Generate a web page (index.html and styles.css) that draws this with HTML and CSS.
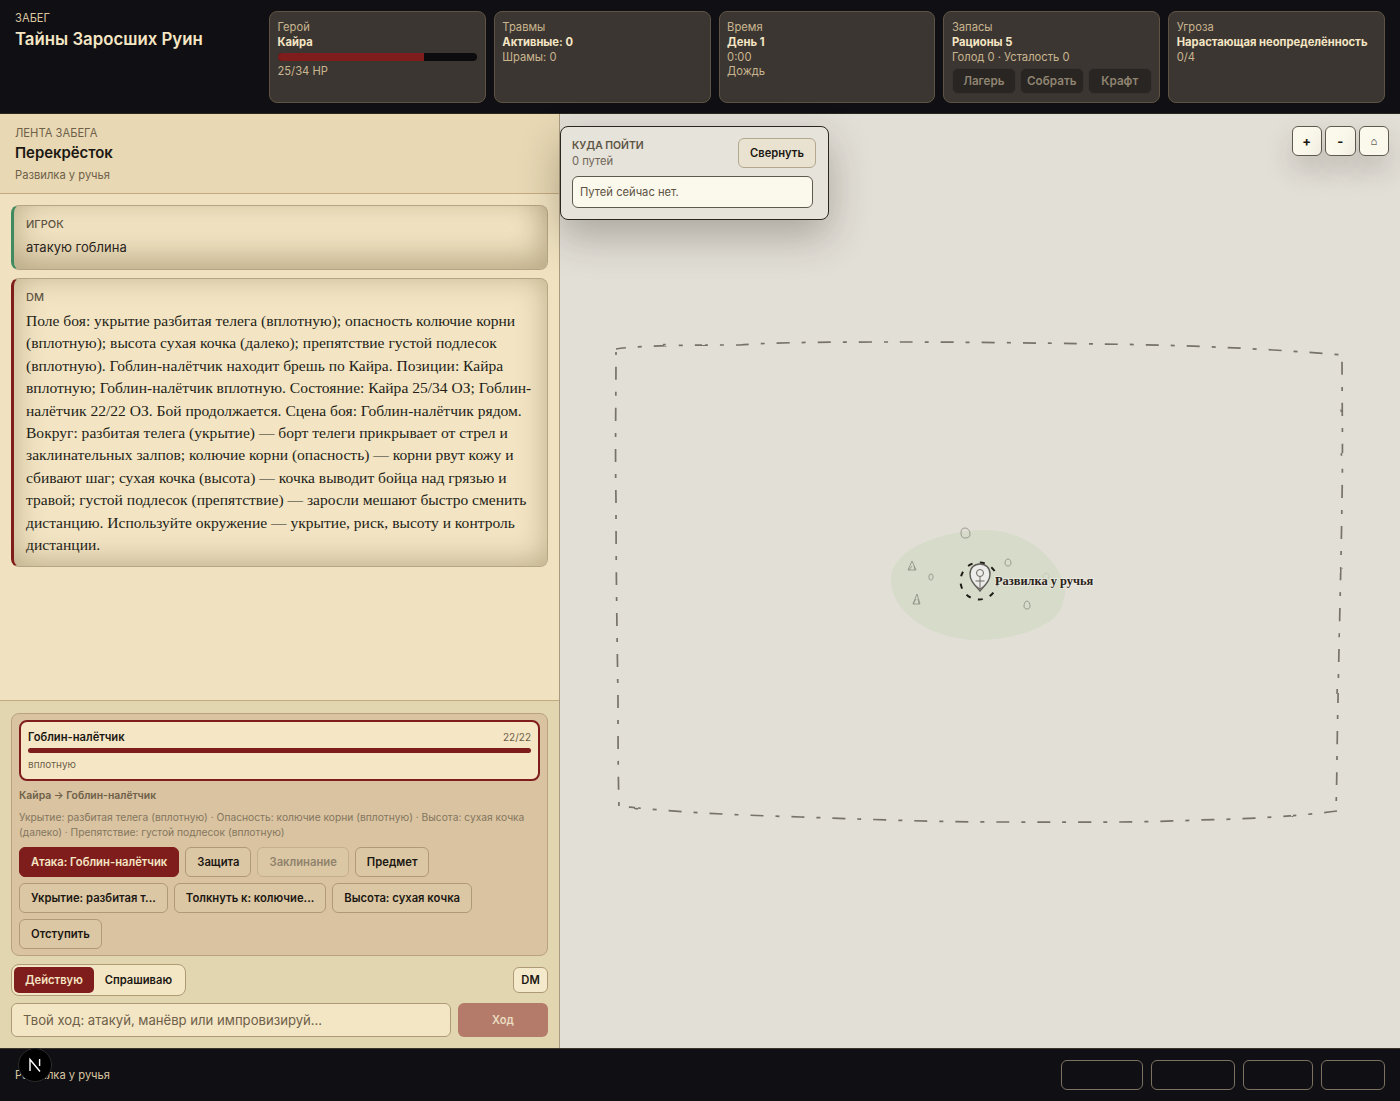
FILE: index.html
```html
<!DOCTYPE html>
<html lang="ru">
<head>
  <meta charset="UTF-8">
  <meta name="viewport" content="width=device-width, initial-scale=1.0">
  <title>Тайны Заросших Руин</title>
  <link rel="stylesheet" href="styles.css">
</head>
<body>
  <div class="app">
    <!-- верхняя панель -->
    <header class="topbar">
      <div class="run-title">
        <div class="run-kicker">ЗАБЕГ</div>
        <div class="run-name">Тайны Заросших Руин</div>
      </div>
      <div class="stat-grid">
        <div class="stat-card">
          <div>Герой</div>
          <div class="stat-strong">Кайра</div>
          <div class="hp-track"><div class="hp-fill" style="width: 73.5%"></div></div>
          <div>25/34 HP</div>
        </div>
        <div class="stat-card">
          <div>Травмы</div>
          <div class="stat-strong">Активные: 0</div>
          <div>Шрамы: 0</div>
        </div>
        <div class="stat-card">
          <div>Время</div>
          <div class="stat-strong">День 1</div>
          <div>0:00</div>
          <div>Дождь</div>
        </div>
        <div class="stat-card">
          <div>Запасы</div>
          <div class="stat-strong">Рационы 5</div>
          <div>Голод 0 · Усталость 0</div>
          <div class="camp-row">
            <button class="camp-btn">Лагерь</button>
            <button class="camp-btn">Собрать</button>
            <button class="camp-btn">Крафт</button>
          </div>
        </div>
        <div class="stat-card">
          <div>Угроза</div>
          <div class="stat-strong">Нарастающая неопределённость</div>
          <div>0/4</div>
        </div>
      </div>
    </header>

    <main class="main">
      <!-- лента -->
      <section class="feed-panel">
        <div class="feed-head">
          <div class="feed-kicker">ЛЕНТА ЗАБЕГА</div>
          <div class="feed-title">Перекрёсток</div>
          <div class="feed-sub">Развилка у ручья</div>
        </div>
        <div class="feed-list">
          <article class="msg msg-player">
            <div class="msg-author">ИГРОК</div>
            <p class="msg-plain">атакую гоблина</p>
          </article>
          <article class="msg msg-dm">
            <div class="msg-author">DM</div>
            <p class="msg-serif">Поле боя: укрытие разбитая телега (вплотную); опасность колючие корни (вплотную); высота сухая кочка (далеко); препятствие густой подлесок (вплотную). Гоблин-налётчик находит брешь по Кайра. Позиции: Кайра вплотную; Гоблин-налётчик вплотную. Состояние: Кайра 25/34 ОЗ; Гоблин-налётчик 22/22 ОЗ. Бой продолжается. Сцена боя: Гоблин-налётчик рядом. Вокруг: разбитая телега (укрытие) — борт телеги прикрывает от стрел и заклинательных залпов; колючие корни (опасность) — корни рвут кожу и сбивают шаг; сухая кочка (высота) — кочка выводит бойца над грязью и травой; густой подлесок (препятствие) — заросли мешают быстро сменить дистанцию. Используйте окружение — укрытие, риск, высоту и контроль дистанции.</p>
          </article>
        </div>
        <div class="composer">
          <div class="combat-box">
            <div class="enemy-card">
              <div class="enemy-row">
                <span class="enemy-name">Гоблин-налётчик</span>
                <span class="enemy-hp">22/22</span>
              </div>
              <div class="enemy-track"></div>
              <div class="enemy-range">вплотную</div>
            </div>
            <div class="combat-target">Кайра → Гоблин-налётчик</div>
            <div class="combat-terrain">Укрытие: разбитая телега (вплотную) · Опасность: колючие корни (вплотную) · Высота: сухая кочка (далеко) · Препятствие: густой подлесок (вплотную)</div>
            <div class="action-row">
              <button class="action-btn action-primary">Атака: Гоблин-налётчик</button>
              <button class="action-btn">Защита</button>
              <button class="action-btn action-off">Заклинание</button>
              <button class="action-btn">Предмет</button>
              <button class="action-btn">Укрытие: разбитая т...</button>
              <button class="action-btn">Толкнуть к: колючие...</button>
              <button class="action-btn">Высота: сухая кочка</button>
              <button class="action-btn">Отступить</button>
            </div>
          </div>
          <div class="mode-row">
            <div class="mode-switch">
              <button class="mode-btn mode-on">Действую</button>
              <button class="mode-btn">Спрашиваю</button>
            </div>
            <button class="dm-btn">DM</button>
          </div>
          <div class="input-row">
            <div class="turn-input">Твой ход: атакуй, манёвр или импровизируй...</div>
            <button class="turn-btn">Ход</button>
          </div>
        </div>
      </section>

      <!-- карта -->
      <section class="map-panel">
        <svg class="map-svg" width="840" height="934" viewBox="560 114 840 934">
          <defs>
            <filter id="rough" x="-5%" y="-5%" width="110%" height="110%">
              <feTurbulence type="fractalNoise" baseFrequency="0.06" numOctaves="2" seed="4"/>
              <feDisplacementMap in="SourceGraphic" scale="2"/>
            </filter>
          </defs>
          <g class="map-border" filter="url(#rough)">
            <path stroke-dashoffset="3" d="M616 349 C640 345 700 345 740 345 C770 342 850 342 900 342 C960 342 1040 343 1100 344 C1180 345 1260 348 1342 355"/>
            <path stroke-dashoffset="-7" d="M1342 355 C1342 400 1343 450 1342 500 C1341 570 1339 640 1338 700 C1337 740 1337 780 1336 809"/>
            <path d="M1337 811 C1300 816 1250 819 1200 820 C1130 823 1060 822 1000 822 C930 822 860 819 800 817 C740 815 680 813 620 806"/>
            <path stroke-dashoffset="24" d="M619 807 C618 770 618 735 618 700 C617 630 616 570 616 500 C615 450 616 400 616 352"/>
          </g>
          <path class="map-blob" d="M891 578 C892 553 930 533 980 530 C1005 529 1022 537 1037 547 C1050 557 1066 577 1065 593 C1063 610 1055 619 1047 623 C1030 633 1005 640 980 640 C935 640 890 615 891 578 Z"/>
          <g class="map-tree">
            <path d="M965 528 C968 528 970 531 970 534 C970 537 968 538 965 538 C962 538 961 536 961 533 C961 530 962 528 965 528 Z"/>
            <path d="M1008 559 C1010 559 1011 561 1011 563 C1011 565 1010 566 1008 566 C1006 566 1005 565 1005 563 C1005 561 1006 559 1008 559 Z"/>
            <path d="M931 574 C933 574 933 576 933 577 C933 579 932 580 931 580 C929 580 929 579 929 577 C929 576 929 574 931 574 Z"/>
            <path d="M1027 601 C1029 601 1030 604 1030 606 C1030 608 1029 609 1027 609 C1025 609 1024 608 1024 606 C1024 604 1025 601 1027 601 Z"/>
            <path class="map-tree-faint" d="M1046 573 C1048 573 1049 575 1049 577 C1049 579 1048 580 1046 580 C1044 580 1043 579 1043 577 C1043 575 1044 573 1046 573 Z"/>
            <path d="M912 561 L916 570 L908 570 Z M912 566 L909 570 M914 566 L915 570"/>
            <path d="M917 594 L920 604 L913 604 Z M916 599 L913 604 M918 599 L919 604"/>
          </g>
          <circle class="map-ring" cx="979" cy="581" r="18.5"/>
          <path class="map-pin" d="M980 591 C975 585 970 581 970 574 C970 568 974 564 980 564 C986 564 990 568 990 574 C990 581 985 585 980 591 Z"/>
          <g class="map-glyph">
            <circle cx="980" cy="573" r="3.5"/>
            <path d="M980 576.5 V589 M975.5 581 H984.5 M976 586 L980 589 L984 586"/>
          </g>
          <text class="map-label" x="995" y="585">Развилка у ручья</text>
        </svg>

        <div class="route-panel">
          <div class="route-head">
            <div>
              <div class="route-title">КУДА ПОЙТИ</div>
              <div class="route-count">0 путей</div>
            </div>
            <button class="route-toggle">Свернуть</button>
          </div>
          <div class="route-empty">Путей сейчас нет.</div>
        </div>

        <div class="zoom-group">
          <button class="zoom-btn">+</button>
          <button class="zoom-btn">-</button>
          <button class="zoom-btn zoom-home">⌂</button>
        </div>
      </section>
    </main>

    <footer class="bottombar">
      <span class="location">Развилка у ручья</span>
      <div class="footer-btns">
        <button class="footer-btn footer-a"></button>
        <button class="footer-btn footer-b"></button>
        <button class="footer-btn footer-c"></button>
        <button class="footer-btn footer-d"></button>
      </div>
    </footer>

    <div class="next-badge">
      <svg width="16" height="16" viewBox="0 0 16 16"><path d="M3 14 V2.5 L13 14.5 M12.6 2 V9" fill="none" stroke="#fff" stroke-width="1.4"/></svg>
    </div>
  </div>
</body>
</html>
```

FILE: styles.css
```css
* {
  box-sizing: border-box;
}

body {
  margin: 0;
  font-family: Inter, "Noto Sans", sans-serif;
  background: #100f14;
  overflow: hidden;
}

button {
  font-family: inherit;
  cursor: pointer;
}

.app {
  position: relative;
  width: 1400px;
  height: 1101px;
  display: flex;
  flex-direction: column;
}

/* верхняя панель */
.topbar {
  height: 114px;
  flex: none;
  display: flex;
  padding: 11px 15px 0;
  background: #100f14;
  border-bottom: 1px solid #2a2620;
}

.run-title {
  width: 254px;
  flex: none;
}

.run-kicker {
  font-size: 11.2px;
  line-height: 14px;
  color: #d9c6a2;
}

.run-name {
  margin-top: 3px;
  font-size: 16.8px;
  line-height: 22px;
  font-weight: 600;
  color: #f5e6c4;
}

.stat-grid {
  flex: 1;
  display: grid;
  grid-template-columns: repeat(5, 1fr);
  gap: 8px;
}

.stat-card {
  height: 92px;
  padding: 8px 7.5px 0;
  background: #3b3632;
  border: 1px solid #5f5443;
  border-radius: 8px;
  font-size: 11.2px;
  line-height: 14.8px;
  color: #c9b58f;
}

.stat-strong {
  font-weight: 700;
  color: #f5e6c4;
}

.hp-track {
  height: 8px;
  margin: 3px 0 3.8px;
  background: #0c0b0d;
  border-radius: 4px;
  overflow: hidden;
}

.hp-fill {
  height: 100%;
  background: #7f1d1d;
}

.camp-row {
  display: flex;
  gap: 4px;
  margin-top: 3.6px;
}

.camp-btn {
  flex: 1;
  height: 26px;
  padding: 0;
  background: #282522;
  border: 1px solid #38332e;
  border-radius: 6px;
  font-size: 11.7px;
  font-weight: 600;
  color: #8f8471;
}

.main {
  flex: 1;
  min-height: 0;
  display: flex;
}

/* лента */
.feed-panel {
  width: 560px;
  flex: none;
  display: flex;
  flex-direction: column;
  background: #f0e2c0;
  border-right: 1px solid #a89a80;
}

.feed-head {
  height: 80px;
  flex: none;
  padding: 12px 15px 0;
  background: #e8d8b4;
  border-bottom: 1px solid #c4aa80;
}

.feed-kicker {
  font-size: 11.2px;
  line-height: 14px;
  color: #6e6049;
}

.feed-title {
  margin-top: 3px;
  font-size: 14.9px;
  line-height: 20px;
  font-weight: 600;
  color: #1b1712;
}

.feed-sub {
  margin-top: 5px;
  font-size: 11.2px;
  line-height: 14px;
  color: #6e6049;
}

.feed-list {
  flex: 1;
  min-height: 0;
  display: flex;
  flex-direction: column;
  gap: 8px;
  padding: 11px;
}

.msg {
  padding: 10px 12px 10px 12px;
  border: 1px solid #b5a584;
  border-left-width: 3px;
  border-radius: 8px;
  background: #f3e5c4;
  box-shadow: inset 0 -4px 30px rgba(90, 70, 30, 0.36);
}

.msg-player {
  height: 65px;
  border-left-color: #3f8a5f;
  box-shadow: inset 0 -10px 34px rgba(90, 70, 30, 0.4);
}

.msg-dm {
  border-left-color: #7f1d1d;
}

.msg-author {
  font-size: 11px;
  line-height: 16px;
  font-weight: 500;
  color: #5f5443;
}

.msg-plain {
  margin: 5px 0 0;
  font-size: 13px;
  line-height: 20px;
  color: #2a241c;
}

.msg-serif {
  margin: 5px 0 0;
  font-family: "Liberation Serif", serif;
  font-size: 15.55px;
  line-height: 22.4px;
  color: #231e17;
}

/* форма хода */
.composer {
  flex: none;
  height: 348px;
  padding: 12px 11px 0;
  background: #e2d6b0;
  border-top: 1px solid #c4aa80;
}

.combat-box {
  height: 243px;
  padding: 6px 7px;
  background: #d9c3a0;
  border: 1px solid #b9a27d;
  border-radius: 8px;
}

.enemy-card {
  height: 61px;
  padding: 8px 7px 0;
  background: #f5e7c6;
  border: 2px solid #7f1d1d;
  border-radius: 8px;
}

.enemy-row {
  display: flex;
  justify-content: space-between;
  font-size: 11.2px;
  line-height: 14px;
}

.enemy-name {
  font-weight: 600;
  color: #1b1712;
}

.enemy-hp {
  font-size: 10px;
  color: #6e6049;
}

.enemy-track {
  height: 5px;
  margin-top: 4px;
  background: #7f1d1d;
  border-radius: 3px;
}

.enemy-range {
  margin-top: 4px;
  font-size: 10px;
  line-height: 14px;
  color: #6e6049;
}

.combat-target {
  margin-top: 8px;
  font-size: 10.4px;
  line-height: 14px;
  font-weight: 600;
  color: #6e6049;
}

.combat-terrain {
  margin-top: 7px;
  font-size: 10.25px;
  line-height: 15px;
  color: #84765f;
}

.action-row {
  display: flex;
  flex-wrap: wrap;
  gap: 6px;
  margin-top: 7px;
}

.action-btn {
  height: 30px;
  padding: 0 11px;
  background: #dcc7a4;
  border: 1px solid #b09a76;
  border-radius: 6px;
  font-size: 11.25px;
  font-weight: 600;
  color: #1b1712;
}

.action-primary {
  background: #7f1d1d;
  border-color: #7f1d1d;
  color: #f5e6c4;
}

.action-off {
  color: #8f826c;
  border-color: #c4b08e;
}

.mode-row {
  display: flex;
  justify-content: space-between;
  align-items: center;
  margin-top: 8px;
}

.mode-switch {
  display: flex;
  height: 32px;
  padding: 2px;
  background: #f3e6c5;
  border: 1px solid #b09a76;
  border-radius: 8px;
}

.mode-btn {
  height: 26px;
  padding: 0 11px;
  background: transparent;
  border: 0;
  border-radius: 5px;
  font-size: 11.2px;
  font-weight: 600;
  color: #1b1712;
}

.mode-on {
  background: #7f1d1d;
  color: #f5e6c4;
}

.dm-btn {
  width: 35px;
  height: 26px;
  padding: 0;
  background: #f5e9cc;
  border: 1px solid #b09a76;
  border-radius: 6px;
  font-size: 11.2px;
  font-weight: 600;
  color: #1b1712;
}

.input-row {
  display: flex;
  gap: 7px;
  margin-top: 7px;
}

.turn-input {
  flex: 1;
  height: 34px;
  padding: 0 11px;
  background: #f3e6c5;
  border: 1px solid #b09a76;
  border-radius: 6px;
  font-size: 13.12px;
  line-height: 32px;
  color: #6e6049;
}

.turn-btn {
  width: 90px;
  height: 34px;
  padding: 0;
  background: #b47b6b;
  border: 0;
  border-radius: 6px;
  font-size: 11.2px;
  font-weight: 600;
  color: #eadcc0;
}

/* карта */
.map-panel {
  position: relative;
  flex: 1;
  background: #e2dfd7;
}

.map-svg {
  position: absolute;
  left: 0;
  top: 0;
}

.map-border path {
  fill: none;
  stroke: #77726a;
  stroke-width: 1.7;
  stroke-dasharray: 13 12 4 12;
}

.map-blob {
  fill: #d6dcc9;
}

.map-tree path {
  fill: none;
  stroke: #8a8a80;
  stroke-width: 0.8;
}

.map-tree .map-tree-faint {
  stroke: #c3c6b8;
}

.map-ring {
  fill: none;
  stroke: #1f1c18;
  stroke-width: 2;
  stroke-dasharray: 5 7.5;
}

.map-pin {
  fill: #ececea;
  stroke: #5e5b56;
  stroke-width: 1.4;
}

.map-glyph circle,
.map-glyph path {
  fill: none;
  stroke: #6b6862;
  stroke-width: 1;
}

.map-label {
  font-family: "Liberation Serif", serif;
  font-size: 12.4px;
  font-weight: 700;
  fill: #2a241c;
  stroke: #f0ede4;
  stroke-width: 2px;
  stroke-opacity: 0.7;
  paint-order: stroke;
}

.route-panel {
  position: absolute;
  left: 0;
  top: 12px;
  width: 269px;
  height: 94px;
  padding: 11px 11px 0;
  background: #e6e3da;
  border: 1px solid #2a2620;
  border-radius: 8px;
  box-shadow: 0 16px 40px rgba(40, 34, 24, 0.3);
}

.route-head {
  display: flex;
  justify-content: space-between;
  align-items: flex-start;
}

.route-title {
  margin-top: 1px;
  font-size: 10.4px;
  line-height: 14px;
  font-weight: 600;
  color: #5c5344;
}

.route-count {
  margin-top: 1px;
  font-size: 11.2px;
  line-height: 15px;
  color: #6e6558;
}

.route-toggle {
  width: 78px;
  height: 30px;
  margin-right: 1px;
  padding: 0;
  background: #e9e2d0;
  border: 1px solid #b3a88f;
  border-radius: 6px;
  font-size: 11.2px;
  font-weight: 600;
  color: #1b1712;
}

.route-empty {
  width: 241px;
  height: 32px;
  margin-top: 7px;
  padding: 0 7px;
  background: #fbf8ec;
  border: 1px solid #5f5a50;
  border-radius: 6px;
  font-size: 11.2px;
  line-height: 30px;
  color: #5c5344;
}

.zoom-group {
  position: absolute;
  top: 12px;
  right: 11px;
  display: flex;
  gap: 3px;
}

.zoom-btn {
  width: 30.5px;
  height: 30px;
  padding: 0;
  background: #fbf8ec;
  border: 1px solid #5f5a50;
  border-radius: 6px;
  box-shadow: 0 14px 28px rgba(40, 34, 24, 0.18);
  font-size: 13px;
  font-weight: 700;
  color: #1b1712;
}

.zoom-home {
  font-size: 11px;
  font-weight: 400;
}

/* нижняя панель */
.bottombar {
  height: 53px;
  flex: none;
  display: flex;
  justify-content: space-between;
  align-items: center;
  padding: 0 15px;
  background: #100f14;
  border-top: 1px solid #3a342a;
}

.location {
  font-size: 11.2px;
  color: #d9c6a2;
}

.footer-btns {
  display: flex;
  gap: 8px;
}

.footer-btn {
  height: 30px;
  padding: 0;
  background: transparent;
  border: 1px solid #7d7260;
  border-radius: 6px;
}

.footer-a { width: 82px; }
.footer-b { width: 84px; }
.footer-c { width: 70px; }
.footer-d { width: 64px; }

.next-badge {
  position: absolute;
  left: 18px;
  top: 1048px;
  width: 34px;
  height: 34px;
  display: flex;
  align-items: center;
  justify-content: center;
  background: #000;
  border: 1px solid #2b2b2b;
  border-radius: 50%;
}
```
